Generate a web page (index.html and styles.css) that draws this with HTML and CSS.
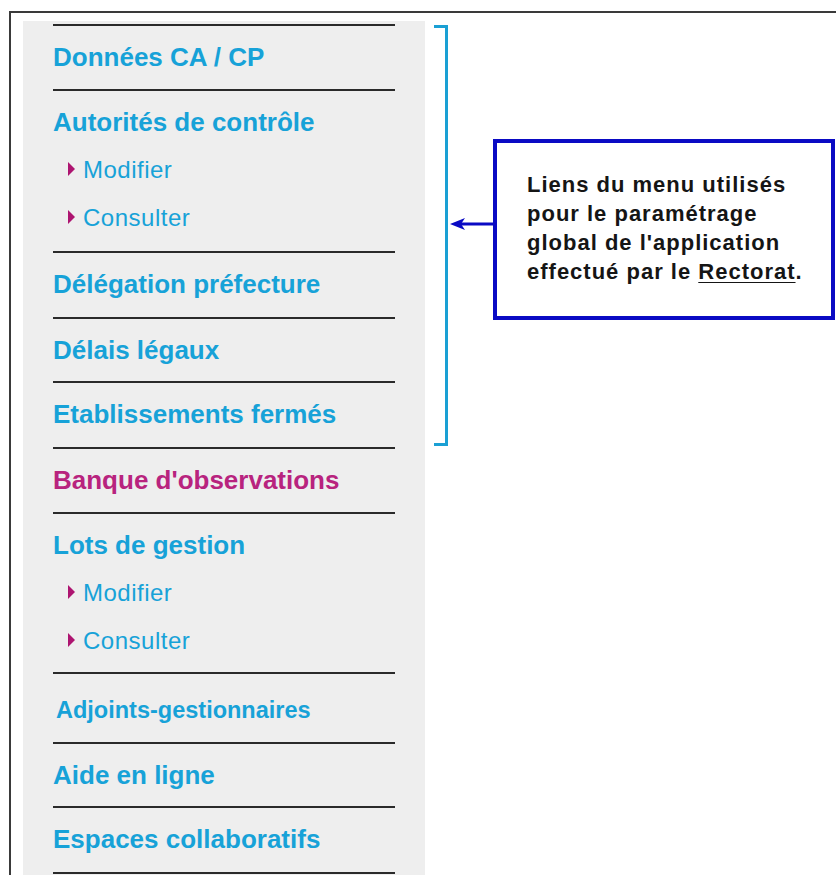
FILE: index.html
```html
<!DOCTYPE html>
<html lang="fr">
<head>
<meta charset="utf-8">
<title>Menu paramétrage</title>
<link rel="stylesheet" href="styles.css">
</head>
<body>
<div class="frame">
  <nav class="menu">
    <div class="item"><a class="head">Données CA / CP</a></div>
    <div class="item group">
      <a class="head">Autorités de contrôle</a>
      <a class="sub"><span class="tri"></span>Modifier</a>
      <a class="sub"><span class="tri"></span>Consulter</a>
    </div>
    <div class="item tall"><a class="head">Délégation préfecture</a></div>
    <div class="item short"><a class="head">Délais légaux</a></div>
    <div class="item tall"><a class="head">Etablissements fermés</a></div>
    <div class="item"><a class="head pink">Banque d'observations</a></div>
    <div class="item group lots">
      <a class="head">Lots de gestion</a>
      <a class="sub"><span class="tri"></span>Modifier</a>
      <a class="sub"><span class="tri"></span>Consulter</a>
    </div>
    <div class="item adj"><a class="head small">Adjoints-gestionnaires</a></div>
    <div class="item short"><a class="head">Aide en ligne</a></div>
    <div class="item tall"><a class="head">Espaces collaboratifs</a></div>
    <div class="item end"></div>
  </nav>
  <div class="annot">
    <div class="bracket"></div>
    <div class="callout">
      <svg class="arrow" width="43" height="14" viewBox="0 0 43 14">
        <line x1="10" y1="7" x2="43" y2="7" stroke="#0a0ac4" stroke-width="3"/>
        <path d="M0 7 L15 1 L11 7 L15 13 Z" fill="#0a0ac4"/>
      </svg>
      <div class="box">
        <p class="note">Liens du menu utilisés<br>pour le paramétrage<br>global de l'application<br>effectué par le <u>Rectorat</u>.</p>
      </div>
    </div>
  </div>
</div>
</body>
</html>
```

FILE: styles.css
```css
html, body {
  margin: 0;
  padding: 0;
  background: #ffffff;
  height: 875px;
  overflow: hidden;
}

.frame {
  margin: 11px 0 0 9px;
  border-left: 2px solid #3a3a3a;
  border-top: 2px solid #3a3a3a;
  padding: 8px 0 0 12px;
  display: flex;
  align-items: flex-start;
  height: 900px;
}

.menu {
  width: 342px;
  padding: 3px 30px 40px;
  background: #eeeeee;
  font-family: "Liberation Sans", Arial, sans-serif;
  flex: none;
}

.item {
  border-top: 2px solid #2a2a2a;
  padding: 7px 0 8px;
  display: flex;
  flex-direction: column;
}

.item.tall {
  padding-bottom: 9px;
}

.item.short {
  padding-bottom: 7px;
}

.group {
  padding-bottom: 9px;
}

.group.lots {
  padding-bottom: 7px;
}

.adj {
  padding-top: 12px;
}

.end {
  padding: 0;
}

.head {
  display: block;
  font-size: 26px;
  font-weight: bold;
  line-height: 48px;
  color: #17a2d8;
  white-space: nowrap;
}

.head.pink {
  color: #b8237e;
}

.head.small {
  font-size: 23.5px;
  padding-left: 3px;
}

.sub {
  display: flex;
  align-items: center;
  padding-left: 15px;
  font-size: 24px;
  letter-spacing: 0.5px;
  line-height: 48px;
  color: #17a2d8;
  white-space: nowrap;
}

.tri {
  width: 0;
  height: 0;
  border-left: 7px solid #ad1470;
  border-top: 7px solid transparent;
  border-bottom: 7px solid transparent;
  margin-right: 8px;
  margin-top: -3px;
}

.annot {
  display: flex;
  align-items: flex-start;
}

.bracket {
  margin: 4px 0 0 9px;
  width: 11px;
  height: 415px;
  border: 3px solid #1aa0d4;
  border-left: none;
}

.callout {
  display: flex;
  align-items: flex-start;
  margin: 118px 0 0 2px;
}

.arrow {
  display: block;
  margin-top: 78px;
  flex: none;
}

.box {
  box-sizing: border-box;
  width: 342px;
  border: 4px solid #0a0ac4;
  padding: 27px 10px 30px 30px;
  background: #ffffff;
}

.note {
  margin: 0;
  font-family: "Liberation Sans", Arial, sans-serif;
  font-weight: bold;
  font-size: 22px;
  letter-spacing: 1px;
  line-height: 29px;
  color: #151515;
  white-space: nowrap;
}

.note u {
  text-decoration-thickness: 1px;
  text-underline-offset: 3px;
}
```
